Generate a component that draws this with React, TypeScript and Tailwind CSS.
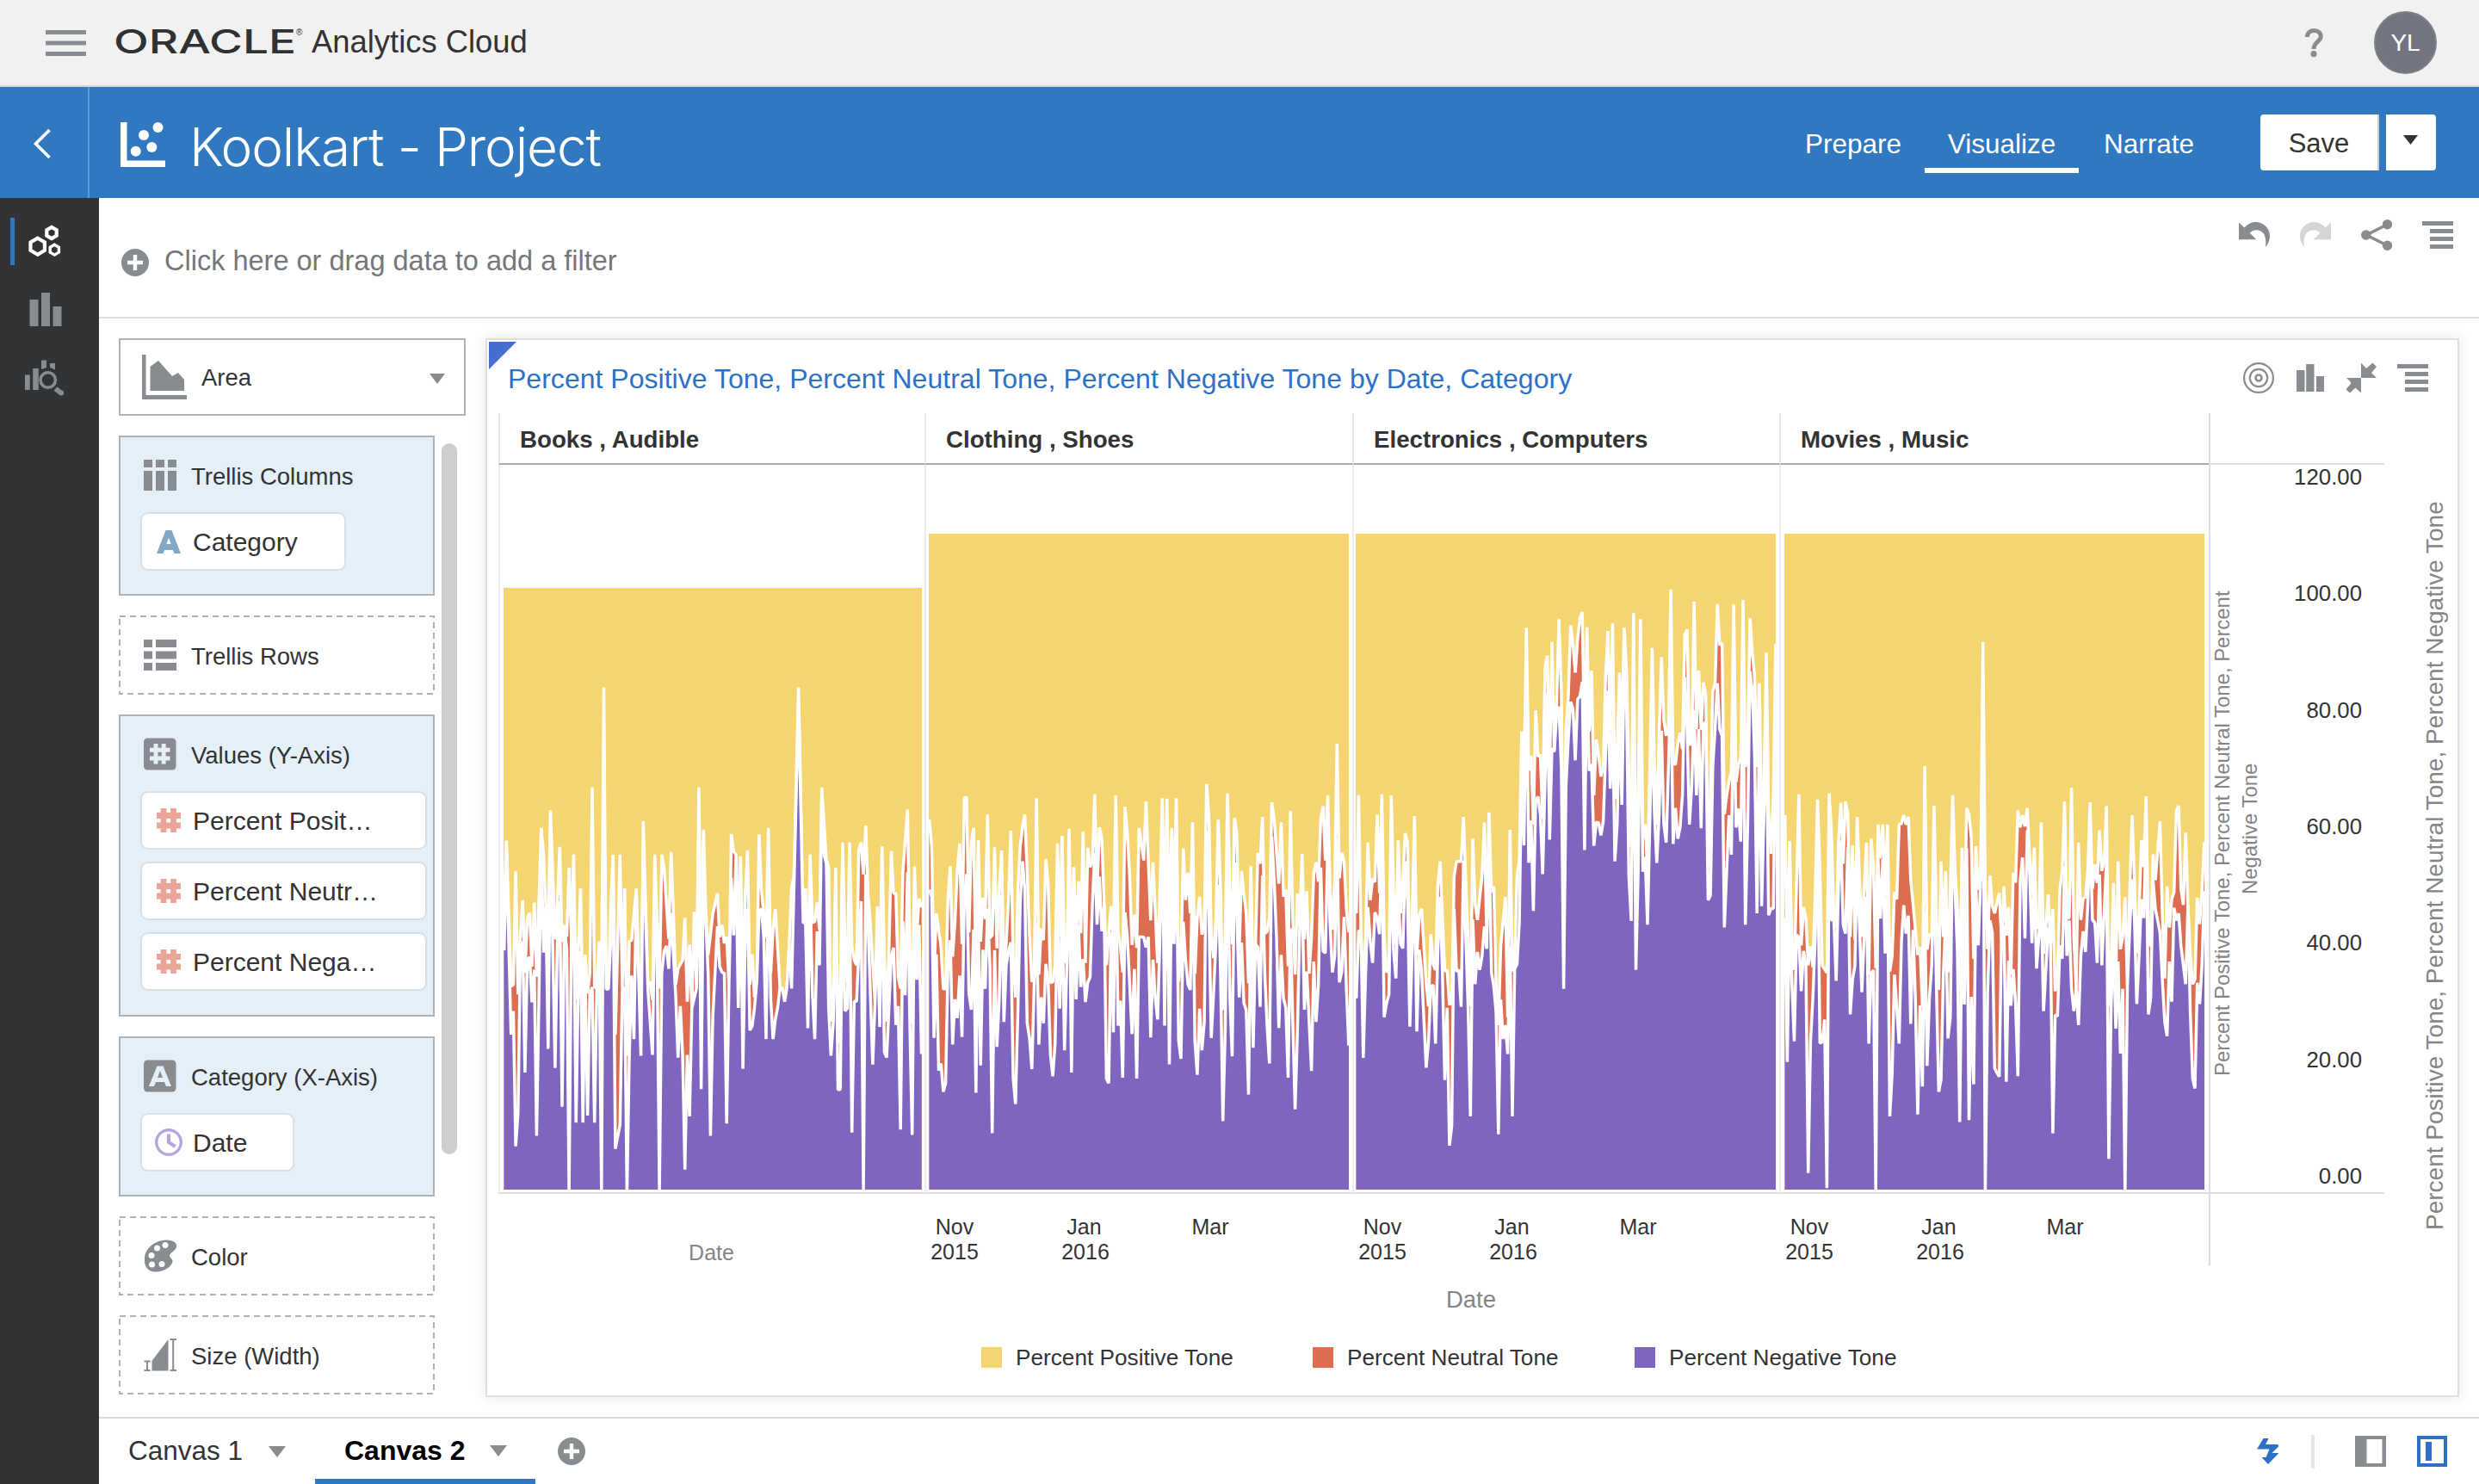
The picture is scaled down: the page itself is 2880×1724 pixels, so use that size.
import React from "react";

type Panel = {
  name: string;
  width: string;
  svgClass: string;
  svgWidth: number;
  dx: number;
  x0: number;
  step: number;
  oy: number;
  ky: number;
  top: number;
  neutral: string;
  negative: string;
};

const PLOT_HEIGHT = 842;

const panels: Panel[] = [
  {
    name: "Books , Audible",
    width: "w-[495px]",
    svgClass: "ml-[4px]",
    svgWidth: 486,
    dx: -15,
    x0: 47,
    step: 8.08,
    oy: 60,
    ky: 1.96,
    top: 143,
    neutral:
      "47,900 55,738 71,1070 82,1066 88,808 96,1088 104,960 112,874 120,1038 128,915 138,903 144,1025 152,879 162,1048 176,709 184,770 193,888 200,960 208,669 225,963 233,880 240,752 249,968 257,930 265,957 273,800 281,962 289,770 297,1100 305,985 313,847 321,1150 330,998 338,1086 346,1040 354,617 362,1072 370,1072 378,968 386,1076 394,389 402,1076 410,1070 419,880 427,770 436,1180 451,770 459,1074 467,847 476,1228 484,967 492,965 508,847 524,1200 532,694 548,1070 556,1060 564,1100 572,770 589,1075 597,770 605,800 621,962 629,764 637,900 645,1065 653,1030 669,1010 677,914 685,1105 693,975 701,1118 710,900 718,1074 726,617 734,1000 742,713 750,900 758,998 774,905 790,858 798,958 806,930 815,972 823,957 831,1066 839,723 847,762 858,770 863,950 871,774 880,1100 887,860 895,760 906,1066 912,997 920,1095 928,1060 936,724 944,850 960,960 968,709 976,1040 985,940 993,894 1009,1072 1017,1074 1025,1105 1033,1070 1042,974 1050,844 1058,820 1073,389 1090,920 1098,847 1106,1040 1114,770 1122,925 1130,922 1138,879 1146,940 1155,617 1170,780 1180,800 1187,1150 1195,1120 1203,800 1211,1200 1219,1080 1227,742 1235,960 1241,1062 1251,742 1259,980 1268,1010 1276,1022 1283,760 1291,742 1300,815 1307,704 1316,860 1325,930 1338,1105 1348,888 1356,1050 1364,751 1372,1000 1380,1150 1388,980 1396,762 1404,858 1413,858 1420,1050 1428,1075 1437,810 1453,667 1461,980 1467,1155 1477,797 1486,950 1494,870 1501,890",
    negative:
      "47,988 55,760 71,1180 79,1126 88,1434 96,1360 104,1000 112,968 120,1266 128,1010 136,1003 144,1106 152,1032 160,1410 168,1100 176,750 184,993 193,888 200,1212 208,720 225,1256 233,960 240,875 249,1344 257,935 265,985 273,1540 281,962 289,900 297,1380 305,1060 313,990 321,1380 330,1050 338,1364 346,1086 354,1072 362,1380 370,1074 378,1000 386,1540 394,600 402,1076 412,1076 427,850 436,1440 451,1385 459,1074 467,1074 476,1540 484,1228 492,1045 500,1190 508,860 524,1228 532,750 548,1076 564,1226 572,900 580,1000 589,1540 597,1040 605,990 613,978 621,1030 629,903 645,1090 653,1232 661,1115 669,1230 677,1487 685,1226 693,1366 701,1120 718,1074 726,700 734,1304 742,800 758,1040 766,1410 774,1140 790,933 798,1025 806,1038 815,1040 823,1382 831,1066 839,823 847,954 855,780 863,1119 871,850 880,1258 887,960 895,893 903,1170 914,1160 922,1120 930,1060 936,900 944,893 952,960 960,1190 968,800 976,1100 985,1190 993,1145 1001,1118 1009,1072 1017,1074 1025,1105 1033,1072 1042,974 1050,1075 1058,850 1073,420 1090,925 1098,925 1106,1165 1114,850 1122,1090 1130,1190 1138,945 1146,1022 1155,660 1163,770 1171,790 1179,1120 1187,1228 1195,1150 1203,850 1211,1305 1219,1305 1227,860 1235,1126 1244,1120 1251,858 1259,1403 1268,1104 1276,1104 1291,876 1300,1540 1307,815 1316,930 1332,1248 1340,1105 1348,950 1356,1162 1364,800 1372,1220 1380,1232 1396,1000 1404,982 1413,1158 1420,1115 1428,1396 1437,922 1445,1090 1453,810 1461,1155 1469,1408 1477,860 1486,1055 1494,930 1501,1224",
  },
  {
    name: "Clothing , Shoes",
    width: "w-[497px]",
    svgClass: "ml-[3px]",
    svgWidth: 488,
    dx: -9,
    x0: 29,
    step: 8.12,
    oy: 0,
    ky: 1.8233,
    top: 80,
    neutral:
      "30,752 38,810 46,1080 53,950 70,1020 80,1110 86,1110 94,920 102,850 111,1042 118,970 126,860 134,802 143,1015 151,706 160,704 169,990 176,800 184,769 191,1090 200,795 208,1010 216,917 224,962 232,741 241,1002 250,996 257,810 265,1024 273,900 281,817 291,1095 299,1010 306,920 313,775 322,1060 330,1128 338,900 346,810 354,765 362,741 370,860 378,1000 387,1095 395,1080 403,706 411,1080 419,982 427,1007 436,835 444,890 452,1097 460,1095 468,1060 476,802 484,1000 492,786 500,1050 508,1055 516,771 525,1085 533,852 541,1020 549,882 557,992 565,777 574,1055 582,811 590,852 598,840 606,698 615,900 622,768 632,790 648,1060 662,935 671,1018 680,700 688,990 696,1020 703,1075 711,724 720,780 728,870 736,1017 744,953 752,1023 761,769 776,838 785,713 800,965 809,842 823,1055 833,900 841,706 850,960 858,707 866,990 874,770 882,907 890,706 898,1095 906,1050 914,813 922,922 931,864 939,950 947,757 957,1078 963,960 971,915 979,995 988,970 996,676 1004,745 1012,1000 1020,1045 1028,960 1037,752 1045,900 1053,1155 1060,1000 1069,696 1077,900 1085,1016 1093,748 1102,780 1110,1028 1118,860 1126,910 1134,950 1142,1098 1150,850 1158,1100 1166,1016 1174,822 1184,845 1191,746 1199,993 1207,988 1215,960 1222,715 1231,750 1247,887 1256,757 1264,915 1272,900 1280,1062 1288,733 1296,960 1304,1080 1312,908 1320,976 1329,824 1337,1005 1345,903 1353,1078 1361,1000 1369,865 1377,842 1385,883 1393,750 1401,723 1409,838 1418,700 1426,900 1434,985 1442,880 1450,591 1459,876 1466,822 1475,840 1483,940 1490,990",
    negative:
      "30,900 38,915 46,1214 53,1037 62,1283 70,1268 78,1328 86,1310 94,1060 102,1007 111,1228 118,1132 126,1172 134,1082 143,1212 151,920 157,867 167,1120 176,1154 182,984 191,1330 200,960 208,1272 216,1027 224,1110 232,940 240,1060 248,1416 257,1028 265,1233 273,1130 281,912 289,1180 297,1060 305,1030 313,1012 322,1300 330,1354 338,1160 346,930 354,840 362,900 370,1182 378,1215 387,1280 395,1100 403,972 411,1228 419,1128 427,1183 436,1057 444,1095 452,1250 460,1295 468,1225 476,955 484,1152 492,930 500,1240 508,1060 516,830 525,1287 533,930 541,1132 549,975 557,1106 565,1047 574,1138 582,1097 590,1085 598,930 606,822 614,974 622,872 630,988 637,935 646,1300 655,1310 662,990 671,1202 680,830 688,1188 696,1135 703,1298 713,948 720,1000 728,1100 736,1206 744,1068 752,1300 761,1000 776,1000 785,1022 793,1000 800,1213 809,1048 817,1130 825,1175 833,1000 841,770 850,1188 858,770 866,1270 874,885 882,1015 890,800 898,1220 906,1258 914,968 922,1050 931,1100 939,1112 947,850 955,1220 963,1292 971,1152 980,1240 988,1180 998,776 1004,950 1012,1214 1020,1120 1028,1010 1037,890 1045,1080 1052,1390 1060,1200 1069,800 1077,1130 1085,1253 1095,842 1102,950 1110,1128 1118,1012 1126,1140 1134,1155 1142,1334 1150,950 1158,1235 1166,1015 1174,1022 1182,1148 1190,870 1199,1080 1207,1190 1215,1268 1223,787 1231,880 1239,1000 1247,1193 1256,1038 1264,1130 1272,1150 1280,1298 1288,982 1296,1180 1304,1365 1312,1200 1320,976 1329,914 1337,1154 1345,1073 1353,1180 1361,1284 1369,1052 1377,1180 1385,1100 1393,853 1401,1030 1412,1034 1418,806 1426,970 1434,1075 1442,1040 1450,792 1458,1096 1466,1075 1475,958 1483,1110 1490,1230",
  },
  {
    name: "Electronics , Computers",
    width: "w-[496px]",
    svgClass: "ml-[2px]",
    svgWidth: 488,
    dx: -15,
    x0: 47,
    step: 8.12,
    oy: 0,
    ky: 1.8233,
    top: 80,
    neutral:
      "47,950 55,700 63,985 71,1118 79,1000 88,800 96,922 104,877 112,884 120,741 128,907 136,698 144,1000 153,1075 161,1070 169,700 177,900 185,1016 193,795 205,950 213,880 218,780 226,800 234,1068 242,960 250,744 258,1038 266,955 274,940 290,1100 298,1147 307,994 315,1058 322,1070 331,890 339,840 347,960 355,1073 363,1070 371,1144 379,1136 388,872 396,840 412,840 421,746 429,880 445,1147 453,792 462,930 470,964 486,870 493,758 502,1000 510,736 519,905 527,893 535,1100 543,1187 551,1020 567,915 575,1170 583,773 591,1073 599,1060 607,870 616,840 624,565 632,660 640,345 648,647 656,616 664,762 672,520 680,618 688,614 697,750 705,430 713,404 721,655 729,375 737,604 745,510 753,327 762,480 770,920 778,560 786,490 794,340 802,380 811,440 819,370 826,325 835,312 843,600 851,344 859,565 867,436 876,700 884,582 892,615 900,660 908,640 916,450 924,352 932,562 940,336 949,708 957,600 965,440 973,576 981,345 989,433 997,650 1005,810 1013,314 1021,917 1029,700 1038,327 1046,790 1054,762 1062,860 1070,640 1078,388 1087,640 1095,762 1103,570 1111,407 1119,540 1127,574 1135,555 1143,264 1152,632 1160,635 1168,590 1176,568 1184,602 1192,360 1200,349 1208,593 1216,590 1224,290 1232,560 1240,436 1249,562 1258,461 1266,490 1274,852 1283,700 1289,480 1298,465 1305,295 1314,382 1324,378 1331,740 1339,700 1347,670 1355,650 1362,296 1371,672 1379,635 1387,620 1395,286 1403,640 1411,600 1420,325 1428,400 1436,450 1444,640 1452,463 1460,760 1468,680 1476,398 1484,740 1492,824 1500,700 1508,379",
    negative:
      "47,1130 55,986 63,990 71,1256 79,1080 88,937 96,1010 104,1055 112,948 120,960 128,994 136,800 144,1170 153,1140 161,1122 169,830 177,1030 185,1088 193,905 201,1015 209,1024 220,840 226,920 234,1190 242,1030 250,882 258,1200 266,1027 274,1070 290,1277 298,1220 307,1105 315,1102 323,1226 331,1030 338,915 347,1080 355,1303 363,1150 372,1442 380,1400 390,940 396,1073 404,1070 412,1148 421,838 429,1000 437,1150 445,1380 455,963 462,1100 470,1032 478,1070 486,1040 494,978 502,1025 510,800 519,1075 527,1105 535,1160 543,1418 551,1133 559,1216 567,1187 575,1248 583,1020 591,1380 599,1068 607,1058 616,970 624,640 632,806 640,430 648,843 656,753 665,945 673,710 680,703 688,740 697,867 709,483 721,794 729,600 737,608 745,530 753,512 762,640 770,1110 778,680 786,580 794,502 802,516 811,626 819,497 827,490 833,460 843,816 851,440 860,648 868,634 876,807 884,757 893,758 900,785 908,755 922,478 932,686 940,530 949,840 957,760 965,528 973,720 982,434 989,500 997,870 1005,966 1013,440 1022,1070 1030,860 1038,450 1046,862 1054,830 1062,974 1070,760 1078,542 1087,740 1095,843 1103,740 1112,563 1119,760 1127,800 1135,640 1143,458 1151,803 1160,727 1168,792 1176,768 1184,700 1192,450 1200,560 1208,762 1216,680 1224,520 1232,700 1240,560 1249,770 1257,545 1266,560 1274,922 1283,912 1291,640 1298,560 1306,463 1314,560 1322,575 1330,980 1338,860 1347,742 1355,826 1363,500 1371,768 1379,728 1387,798 1395,460 1403,974 1411,760 1422,437 1428,480 1436,620 1444,950 1452,560 1460,935 1468,740 1476,540 1484,954 1492,940 1500,940 1508,560",
  },
  {
    name: "Movies , Music",
    width: "w-[499px]",
    svgClass: "ml-[4px]",
    svgWidth: 488,
    dx: -13,
    x0: 41,
    step: 8.12,
    oy: 0,
    ky: 1.8233,
    top: 80,
    neutral:
      "41,742 49,1070 57,797 65,1020 74,1070 82,880 90,698 98,1018 106,937 114,960 122,1060 130,1020 138,1064 146,900 155,709 163,860 171,1060 187,1076 196,696 204,780 212,960 220,980 228,800 236,716 244,845 252,713 261,740 269,1000 277,806 285,1005 293,746 301,880 309,1000 317,900 325,800 334,1080 342,792 350,850 357,1066 365,762 374,834 382,762 390,912 398,762 406,1073 414,1040 423,905 431,920 440,762 448,760 456,742 464,762 472,746 480,880 488,930 496,985 504,1038 512,1022 520,1148 528,638 537,1027 545,994 553,1000 561,722 569,950 577,1112 585,840 593,1000 601,860 610,1075 618,900 626,700 634,860 642,940 650,1117 658,811 667,1000 675,727 683,740 691,790 699,1046 707,808 715,900 723,880 731,375 740,900 748,1026 756,870 763,935 771,950 779,927 788,907 796,1010 804,893 812,997 820,937 829,1080 838,864 846,885 854,732 862,768 870,742 878,766 885,727 893,830 902,912 910,811 918,980 926,980 934,757 943,1036 951,980 959,910 967,1015 975,941 983,1115 991,1080 1000,900 1008,860 1016,713 1024,960 1032,960 1040,684 1048,1000 1056,1110 1064,800 1073,964 1081,918 1089,916 1097,860 1105,715 1113,898 1121,847 1129,886 1137,774 1146,860 1154,840 1162,723 1171,1148 1178,1060 1186,886 1194,1100 1202,840 1211,1026 1219,1000 1227,916 1235,1105 1243,900 1251,742 1259,880 1268,1034 1276,950 1284,795 1291,852 1300,702 1308,1000 1316,1020 1325,825 1333,880 1348,755 1356,950 1365,1088 1373,893 1381,980 1389,920 1397,905 1405,733 1413,722 1421,900 1429,932 1438,779 1446,935 1454,1040 1462,1100 1470,1090 1478,917 1486,973 1494,900 1502,799",
    negative:
      "41,960 49,1265 57,940 65,1100 73,1221 83,996 90,1000 98,1115 106,1030 114,1060 122,1500 130,1220 138,1130 146,1000 155,780 163,1225 171,1222 179,1175 187,1532 196,780 203,964 212,965 220,1093 228,890 236,796 244,975 252,993 260,810 269,1164 277,1090 285,1062 293,833 301,980 309,1117 317,1000 325,915 334,1226 342,1078 350,1070 357,1542 365,835 373,961 382,835 390,1035 398,874 406,1380 414,1290 422,1080 431,1150 439,1226 447,1010 455,933 463,993 472,955 480,1184 488,985 496,1130 504,1376 512,1145 520,1317 528,945 537,1273 545,1130 553,1060 561,840 569,1100 577,1328 586,1303 593,1080 601,960 610,1215 618,1170 626,780 634,900 642,1030 650,1392 658,967 667,1143 675,812 683,1388 691,1127 699,1312 707,900 715,1018 723,880 731,560 739,1542 747,1120 756,965 765,990 771,1278 780,1288 790,1296 796,980 804,977 812,1307 820,1050 829,1146 838,1068 846,1140 854,1295 862,880 870,832 878,1003 886,774 894,860 902,1013 910,880 918,1067 926,1000 934,920 943,1157 951,1070 959,980 967,1015 975,1416 983,1165 991,1168 1000,1018 1008,1046 1016,850 1024,1040 1032,965 1040,1110 1048,1157 1057,1110 1064,1187 1073,1040 1081,988 1089,1032 1097,930 1105,780 1113,964 1121,970 1129,1055 1138,868 1146,1060 1162,840 1170,1470 1178,1148 1186,1000 1194,1194 1202,1052 1211,1247 1219,1110 1227,1542 1235,1105 1243,980 1252,878 1260,960 1268,1142 1276,1040 1284,920 1291,960 1300,780 1308,1164 1316,1130 1325,880 1333,940 1348,990 1356,1090 1365,1180 1373,1210 1381,1052 1389,1137 1397,938 1405,965 1413,950 1421,1020 1438,1100 1446,933 1454,1160 1462,1300 1470,1321 1478,1097 1486,1142 1494,1060 1502,903",
  },
];

/* Snap every sample to its day on the axis and convert it to plot pixels. */
function toPoints(p: Panel, series: string): string[] {
  return series.split(" ").map((pair) => {
    const [x, y] = pair.split(",").map(Number);
    const day = Math.round((x - p.x0) / p.step);
    const px = (p.x0 + day * p.step) / 3 + p.dx;
    const py = p.oy + y / p.ky;
    return px.toFixed(1) + "," + py.toFixed(1);
  });
}

function Plot({ p }: { p: Panel }) {
  const layer = (series: string, fill: string) => {
    const pts = toPoints(p, series);
    const line = pts.join(" ");
    const lastX = pts[pts.length - 1].split(",")[0];
    const firstX = pts[0].split(",")[0];
    return (
      <>
        <polygon points={`${firstX},${PLOT_HEIGHT} ${line} ${lastX},${PLOT_HEIGHT}`} fill={fill} />
        <polyline points={line} fill="none" stroke="#fff" strokeWidth="3.5" strokeLinejoin="bevel" />
      </>
    );
  };
  return (
    <svg className={"block " + p.svgClass} width={p.svgWidth} height={PLOT_HEIGHT}>
      <rect x="0" y={p.top} width={p.svgWidth} height={PLOT_HEIGHT - p.top} fill="#f4d56f" />
      {layer(p.neutral, "#dd6d50")}
      {layer(p.negative, "#7f64c0")}
    </svg>
  );
}

const G = "#888b8f";

const Triangle = ({ color = G, w = 20, h = 13 }: { color?: string; w?: number; h?: number }) => (
  <svg width={w} height={h} viewBox="0 0 20 13" preserveAspectRatio="none">
    <path d="M0 0H20L10 13Z" fill={color} />
  </svg>
);

const PlusCircle = () => (
  <svg width="32" height="32" viewBox="0 0 32 32">
    <circle cx="16" cy="16" r="16" fill={G} />
    <path d="M16 7V25M7 16H25" stroke="#fff" strokeWidth="4.4" />
  </svg>
);

const Help = () => (
  <svg width="22" height="34" viewBox="0 0 22 34">
    <path
      d="M2.500 10C2.500 5 6 2.500 10.500 2.500C15 2.500 18.200 5.200 18.200 9.500C18.200 15 10 16 10 24"
      fill="none"
      stroke={G}
      strokeWidth="5"
    />
    <circle cx="10" cy="29.700" r="3.600" fill={G} />
  </svg>
);

const MenuLines = () => (
  <svg width="36" height="36" viewBox="0 0 36 36" fill={G}>
    <path d="M0 2H36V7H0ZM9 11H36V16H9ZM9 20H36V25H9ZM9 29H36V34H9Z" />
  </svg>
);

const Undo = ({ flip = false }: { flip?: boolean }) => (
  <svg width="36" height="30" viewBox="0 0 36 30" className={flip ? "-scale-x-100" : ""}>
    <path
      d="M0 0.500V20.300H20.300L12.500 12.500C17 8 24 8 28 12.500C31.500 16.500 31.800 23 31 29C34 26 36 20.500 36 16C36 7 28.500 0 19.500 0C14.500 0 10 2.500 6.500 6.500Z"
      fill={flip ? "#d3d5d6" : G}
    />
  </svg>
);

const Share = () => (
  <svg width="36" height="36" viewBox="0 0 36 36" fill={G}>
    <path d="M30 6L6 18L30 30" fill="none" stroke={G} strokeWidth="3.4" />
    <circle cx="30.5" cy="5.7" r="5.7" />
    <circle cx="5.8" cy="18" r="5.8" />
    <circle cx="30.5" cy="30.3" r="5.7" />
  </svg>
);

const BarsIcon = () => (
  <svg width="32" height="32" viewBox="0 0 32 32" fill={G}>
    <path d="M0 7H9.5V32H0ZM11.2 0H20.5V32H11.2ZM23 14H32V32H23Z" />
  </svg>
);

const Target = () => (
  <svg width="36" height="36" viewBox="0 0 36 36" fill="none" stroke={G} strokeWidth="2.2">
    <circle cx="18" cy="18" r="16.900" />
    <circle cx="18" cy="18" r="10.200" />
    <circle cx="18" cy="18" r="3.500" strokeWidth="2.600" />
  </svg>
);

const Collapse = () => (
  <svg width="36" height="36" viewBox="0 0 36 36" fill={G}>
    <path d="M17 0.500V18H35L29 12.300L35 5L30.500 0.500L23 7Z" />
    <path d="M17 35.500V18H0L5 22.800V25L0 30.500V32L4 35.500L10.500 29.500Z" />
  </svg>
);

const ChipHash = () => (
  <svg width="28" height="28" viewBox="0 0 28 28">
    <path d="M8 0V28M19.500 0V28M0 8.500H28M0 20H28" stroke="#e9a698" strokeWidth="6.800" fill="none" />
  </svg>
);

const ChipA = () => (
  <svg width="28" height="27" viewBox="0 0 28 27">
    <path fillRule="evenodd" d="M10.500 0H17.500L28 27H20.500L18.800 23H9.200L7.500 27H0ZM14 9L11.300 16H16.700Z" fill="#82a8c8" />
  </svg>
);

const ChipClock = () => (
  <svg width="32" height="32" viewBox="0 0 32 32" fill="none" stroke="#b5a6db">
    <circle cx="16" cy="16" r="14.300" strokeWidth="3.400" />
    <path d="M16 6.500V16L23.500 21" strokeWidth="4.200" />
  </svg>
);

const TrellisCols = () => (
  <svg width="38" height="38" viewBox="0 0 38 38" fill={G}>
    <path d="M0 1H10V10H0ZM14 1H24V10H14ZM28 1H38V10H28ZM0 14H10V37H0ZM14 14H24V37H14ZM28 14H38V37H28Z" />
  </svg>
);

const TrellisRows = () => (
  <svg width="38" height="38" viewBox="0 0 38 38" fill={G}>
    <path d="M0 1H10V10H0ZM14 1H38V10H14ZM0 14.500H10V23.500H0ZM14 14.500H38V23.500H14ZM0 28H10V37H0ZM14 28H38V37H14Z" />
  </svg>
);

const BoxHash = () => (
  <svg width="38" height="38" viewBox="0 0 38 38">
    <rect y="0.500" width="37.500" height="37" rx="4.500" fill={G} />
    <path d="M14 7V30.500M23.200 7V30.500M7 14.200H30.500M7 24H30.500" stroke="#e5eff8" strokeWidth="4.900" />
  </svg>
);

const BoxA = () => (
  <svg width="38" height="38" viewBox="0 0 38 38">
    <rect y="0.500" width="37.500" height="37" rx="4.500" fill={G} />
    <path fillRule="evenodd" d="M15.500 7.500H22.500L32 31H26L24 26H14L12 31H6ZM19 13L16 21H22Z" fill="#e5eff8" />
  </svg>
);

const Palette = () => (
  <svg width="40" height="38" viewBox="0 0 40 38">
    <path
      d="M14 37.500C4 37.500 0 30 1 21C2 10 13 1 26 0.500C34 0.200 39 4 38 8.500C37 13 31 15 30 18.500C30 21.500 33.500 22 33.500 25C33.500 30 25 37.500 14 37.500Z"
      fill={G}
    />
    <g fill="#fff">
      <circle cx="25" cy="6.500" r="3.500" />
      <circle cx="15.500" cy="10" r="3.500" />
      <circle cx="9" cy="18.500" r="3.500" />
      <circle cx="9.500" cy="29" r="3.500" />
      <circle cx="21" cy="28.500" r="3.500" />
    </g>
  </svg>
);

const SizeIcon = () => (
  <svg width="38" height="38" viewBox="0 0 38 38">
    <path d="M9.500 37.500V26L28.500 1V37.500Z" fill={G} />
    <path d="M30.500 1H38M30.500 37H38M34.200 1V37M0.500 26.500H7.500M0.500 37H7.500M4 26.500V37" stroke={G} strokeWidth="2" />
  </svg>
);

const hex = (cx: number, cy: number, r: number) =>
  [0, 1, 2, 3, 4, 5]
    .map((k) => {
      const a = (Math.PI / 3) * k + Math.PI / 2;
      return (cx + r * Math.cos(a)).toFixed(1) + "," + (cy + r * Math.sin(a)).toFixed(1);
    })
    .join(" ");

function Chip({ icon, label, width }: { icon: React.ReactNode; label: string; width: string }) {
  return (
    <div className={"flex h-[68px] items-center rounded-[9px] border-2 border-[#d8e0e6] bg-white text-[30px] " + width}>
      <span className="flex w-[59px] shrink-0 items-center justify-center pl-[3px]">{icon}</span>
      <span className="pt-[1px] whitespace-nowrap">{label}</span>
    </div>
  );
}

function DropZone({
  icon,
  label,
  height,
  children,
}: {
  icon: React.ReactNode;
  label: string;
  height: string;
  children: React.ReactNode;
}) {
  return (
    <div className={"w-[367px] shrink-0 border-2 border-[#afb2b4] bg-[#e5eff8] " + height}>
      <div className="flex h-[88px] items-center pl-[27px] text-[27.5px]">
        <span className="w-[55px]">{icon}</span>
        <span className="pt-[3px]">{label}</span>
      </div>
      <div className="-mt-px flex flex-col gap-[14px] pl-[23px]">{children}</div>
    </div>
  );
}

function DashedZone({ icon, label }: { icon: React.ReactNode; label: string }) {
  return (
    <div className="relative h-[92px] w-[367px] shrink-0">
      <svg className="absolute inset-0" width="367" height="92">
        <rect x="1" y="1" width="365" height="90" fill="none" stroke="#afb2b4" strokeWidth="2" strokeDasharray="7 5" />
      </svg>
      <div className="flex h-full items-center pl-[29px] text-[27.5px]">
        <span className="w-[55px]">{icon}</span>
        <span className="pt-[3px]">{label}</span>
      </div>
    </div>
  );
}

const Legend = ({ color, label, gap }: { color: string; label: string; gap: string }) => (
  <div className={"flex items-center " + gap}>
    <span className={"mr-[16px] h-[24px] w-[24px] " + color} />
    <span className="text-[26.2px] whitespace-nowrap">{label}</span>
  </div>
);

export default function App() {
  return (
    <div className="flex h-[1724px] w-[2880px] flex-col overflow-hidden bg-white font-['Liberation_Sans',Arial,sans-serif] text-[#333]">
      {/* Brand bar */}
      <header className="flex h-[101px] shrink-0 items-center border-b-2 border-[#d9d9d9] bg-[#f1f1f1]">
        <svg className="ml-[53px]" width="47" height="30" viewBox="0 0 47 30" fill={G}>
          <path d="M0 0H47V5H0ZM0 12.500H47V17.500H0ZM0 25H47V30H0Z" />
        </svg>
        <svg className="ml-[31px]" width="228" height="60" viewBox="0 0 228 60">
          <text
            x="1"
            y="41.5"
            textLength="212"
            lengthAdjust="spacingAndGlyphs"
            fontFamily="Inter"
            fontWeight="500"
            fontSize="38.5"
            fill="#2f3133"
          >
            ORACLE
          </text>
          <text x="213" y="21" fontSize="10" fill="#2f3133">
            ®
          </text>
        </svg>
        <span className="ml-[3px] text-[36.4px]">Analytics Cloud</span>
        <span className="mr-[58px] ml-auto">
          <Help />
        </span>
        <span className="mr-[49px] flex h-[73px] w-[73px] items-center justify-center rounded-full border-2 border-[#7d8085] bg-[#72757f] text-[28px] text-white">
          YL
        </span>
      </header>

      {/* Project bar */}
      <div className="flex h-[129px] shrink-0 items-center bg-[#3079c1] text-white">
        <div className="flex h-full w-[104px] items-center border-r-2 border-[#5b97d2] pt-[3px] pl-[38px]">
          <svg width="22" height="36" viewBox="0 0 22 36" fill="none" stroke="#fff" strokeWidth="3.600">
            <path d="M19.500 2L3.500 18L19.500 34" />
          </svg>
        </div>
        <svg className="mt-[5px] ml-[36px]" width="52" height="52" viewBox="0 0 52 52" fill="#fff">
          <path d="M0 0H7.500V44.500H52V52H0Z" />
          <circle cx="43.500" cy="6" r="6" />
          <circle cx="27" cy="15" r="6" />
          <circle cx="36.300" cy="29" r="6" />
          <circle cx="17.700" cy="33.700" r="6" />
        </svg>
        <h1 className="mt-[10px] ml-[28px] font-['Inter'] text-[62px] leading-none font-light tracking-[-1.100px] whitespace-nowrap">
          Koolkart - Project
        </h1>
        <nav className="ml-auto flex h-[70px] text-[31.5px] leading-[73px]">
          <span className="w-[166px] text-center">Prepare</span>
          <span className="h-[70px] w-[179px] border-b-[6px] border-white text-center">Visualize</span>
          <span className="w-[163px] text-center">Narrate</span>
        </nav>
        <button className="ml-[48px] h-[65px] w-[138px] rounded-l-[4px] border-r-2 border-[#cfcfcf] bg-white pt-[4px] text-[31px] text-[#333]">
          Save
        </button>
        <button className="mr-[50px] ml-[8px] flex h-[65px] w-[58px] justify-center rounded-r-[4px] bg-white pt-[24px] pr-[2px]">
          <Triangle color="#333" w={17} h={11} />
        </button>
      </div>

      <div className="flex min-h-0 flex-1">
        {/* Side rail */}
        <aside className="flex w-[115px] shrink-0 flex-col bg-[#323335]">
          <div className="mt-[23px] ml-[12px] flex h-[55px] items-center border-l-[5px] border-[#3079c1] pl-[15px]">
            <svg width="42" height="42" viewBox="32 259.500 42 42" fill="none" stroke="#fff" strokeWidth="4.200">
              <polygon points={hex(43.7, 285.7, 9.5)} />
              <polygon points={hex(60, 270, 6.6)} />
              <polygon points={hex(63.3, 289.7, 5.9)} strokeWidth="3.400" />
            </svg>
          </div>
          <svg className="mt-[32px] ml-[34px]" width="38" height="39" viewBox="0 0 38 39" fill={G}>
            <path d="M0.500 8H10.500V39H0.500ZM14 0H24V39H14ZM27.500 16H37.500V39H27.500Z" />
          </svg>
          <svg className="mt-[37px] ml-[27px]" width="50" height="48" viewBox="27 416 50 48" fill={G}>
            <path d="M29 435.500H34.800V453H29ZM38.200 428H44.800V453H38.200ZM48 418.500H54V427L48 429ZM58 422H64V429.500L58 427Z" />
            <circle cx="55.700" cy="441.500" r="8.700" fill="none" stroke={G} strokeWidth="3.600" />
            <path d="M64.500 451.500L71.500 457" stroke={G} strokeWidth="6" strokeLinecap="butt" />
            <circle cx="71.200" cy="456.500" r="2.900" />
          </svg>
        </aside>

        <main className="flex min-w-0 flex-1 flex-col">
          {/* Filter bar */}
          <section className="flex h-[140px] shrink-0 border-b-2 border-[#d8e0e6]">
            <div className="mt-[55px] ml-[26px] flex h-[40px] items-center">
              <PlusCircle />
              <span className="ml-[18px] pb-[3px] text-[32.5px] text-[#757779]">Click here or drag data to add a filter</span>
            </div>
            <div className="mt-[25px] mr-[30px] ml-auto flex h-[36px] items-center gap-[35px]">
              <Undo />
              <Undo flip />
              <Share />
              <MenuLines />
            </div>
          </section>

          <section className="flex h-[1276px] shrink-0">
            {/* Grammar panel */}
            <div className="mt-[23px] ml-[23px] w-[403px] shrink-0">
              <div className="flex h-[90px] items-center border-2 border-[#afb2b4] pr-[22px] pl-[25px] text-[27.5px]">
                <svg width="52" height="52" viewBox="0 0 52 52" fill={G}>
                  <path d="M0 0H4.500V47H52V52H0Z" />
                  <path d="M9.500 42V14L19 7L35 25L42 21L49 29V42Z" />
                </svg>
                <span className="ml-[17px] pt-[2px]">Area</span>
                <span className="mt-[4px] ml-auto">
                  <Triangle w={18} h={12} />
                </span>
              </div>
              <div className="mt-[23px] flex">
                <div className="flex flex-col gap-[23px]">
                  <DropZone icon={<TrellisCols />} label="Trellis Columns" height="h-[186px]">
                    <Chip icon={<ChipA />} label="Category" width="w-[239px]" />
                  </DropZone>
                  <DashedZone icon={<TrellisRows />} label="Trellis Rows" />
                  <DropZone icon={<BoxHash />} label="Values (Y-Axis)" height="h-[351px]">
                    <Chip icon={<ChipHash />} label="Percent Posit…" width="w-[333px]" />
                    <Chip icon={<ChipHash />} label="Percent Neutr…" width="w-[333px]" />
                    <Chip icon={<ChipHash />} label="Percent Nega…" width="w-[333px]" />
                  </DropZone>
                  <DropZone icon={<BoxA />} label="Category (X-Axis)" height="h-[186px]">
                    <Chip icon={<ChipClock />} label="Date" width="w-[179px]" />
                  </DropZone>
                  <DashedZone icon={<Palette />} label="Color" />
                  <DashedZone icon={<SizeIcon />} label="Size (Width)" />
                </div>
                <div className="mt-[9px] ml-[8px] h-[826px] w-[18px] rounded-full bg-[#cdcdcd]" />
              </div>
            </div>

            {/* Visualization card */}
            <div className="relative mt-[23px] ml-[23px] flex h-[1230px] w-[2293px] shrink-0 flex-col border-2 border-[#d8e0e6] bg-white shadow-[0_0_14px_rgba(0,0,0,0.1)]">
              <svg className="absolute top-[2px] left-[2px]" width="32" height="32">
                <path d="M0 0H32L0 32Z" fill="#466ed0" />
              </svg>
              <div className="flex h-[85px] shrink-0 items-center pt-[5px] pr-[34px] pl-[24px]">
                <span className="text-[32px] tracking-[0.020px] whitespace-nowrap text-[#2d71c7]">
                  Percent Positive Tone, Percent Neutral Tone, Percent Negative Tone by Date, Category
                </span>
                <div className="mt-[-2px] ml-auto flex items-center">
                  <Target />
                  <span className="ml-[26px]">
                    <BarsIcon />
                  </span>
                  <span className="ml-[26px]">
                    <Collapse />
                  </span>
                  <span className="ml-[23px]">
                    <MenuLines />
                  </span>
                </div>
              </div>

              <div className="flex h-[990px] shrink-0 pl-[13px]">
                <div className="flex">
                  {panels.map((p, i) => (
                    <div key={p.name} className={"shrink-0 " + p.width}>
                      <div className="h-[60px] border-b-2 border-l-2 border-[#a9a9a9] border-l-[#e6e8ea] pl-[23px] text-[27.700px] leading-[62px] font-bold whitespace-nowrap">
                        {p.name}
                      </div>
                      <div className="h-[847px] border-b-2 border-l-2 border-[#d8e0e6] border-l-[#ececec]">
                        <Plot p={p} />
                      </div>
                      {i === 0 ? (
                        <div className="pt-[52px] text-center text-[25px] leading-[32px] text-[#858585]">Date</div>
                      ) : (
                        <div className="flex pt-[24px] text-center text-[25px] leading-[29px]">
                          <div className="w-[70px]">
                            Nov
                            <br />
                            2015
                          </div>
                          <div className="w-[231px]">
                            Jan
                            <br />
                            <span className="pl-[3px]">2016</span>
                          </div>
                          <div className="w-[62px]">Mar</div>
                        </div>
                      )}
                    </div>
                  ))}
                </div>
                <div className="flex w-[204px] shrink-0 flex-col border-l-2 border-[#d8e0e6]">
                  <div className="h-[60px] border-b-2 border-[#d8e0e6]" />
                  <div className="flex h-[847px] border-b-2 border-[#d8e0e6]">
                    <div className="-ml-[2px] flex rotate-180 items-center justify-center text-center text-[23.900px] leading-[32px] whitespace-nowrap text-[#858585] [writing-mode:vertical-rl]">
                      <span>
                        <span className="inline-block -translate-y-[6px]">
                          Percent Positive Tone, Percent Neutral Tone, Percent
                        </span>
                        <br />
                        Negative Tone
                      </span>
                    </div>
                    <div className="mr-[26px] ml-auto flex h-[840px] flex-col justify-between text-right text-[25.800px] leading-[28px]">
                      {["120.00", "100.00", "80.00", "60.00", "40.00", "20.00", "0.00"].map((t) => (
                        <span key={t}>{t}</span>
                      ))}
                    </div>
                  </div>
                </div>
                <div className="ml-[42px] flex h-[1051px] rotate-180 items-center justify-center text-[28px] leading-[34px] whitespace-nowrap text-[#858585] [writing-mode:vertical-rl]">
                  Percent Positive Tone, Percent Neutral Tone, Percent Negative Tone
                </div>
              </div>

              <div className="h-[50px] w-[2286px] shrink-0 pt-[22px] text-center text-[27.5px] leading-[36px] text-[#858585]">
                Date
              </div>
              <div className="mt-[39px] flex items-center pl-[574px] leading-[36px]">
                <Legend color="bg-[#f4d56f]" label="Percent Positive Tone" gap="w-[385px]" />
                <Legend color="bg-[#dd6d50]" label="Percent Neutral Tone" gap="w-[374px]" />
                <Legend color="bg-[#7f64c0]" label="Percent Negative Tone" gap="" />
              </div>
            </div>
          </section>

          {/* Canvas tabs */}
          <footer className="flex h-[78px] shrink-0 items-center border-t-2 border-[#d9dbdc]">
            <div className="flex h-full w-[251px] items-center pl-[34px]">
              <span className="w-[163px] text-[31.5px]">Canvas 1</span>
              <Triangle />
            </div>
            <div className="flex h-[70px] w-[256px] items-center self-end border-b-[6px] border-[#3079c1] pb-[2px] pl-[34px] text-black">
              <span className="w-[169px] text-[32px] font-bold">Canvas 2</span>
              <Triangle />
            </div>
            <span className="ml-[26px]">
              <PlusCircle />
            </span>
            <div className="mr-[37px] ml-auto flex items-center">
              <svg width="26" height="30" viewBox="0 0 26 30" fill="#2d71c7">
                <path d="M7.500 0H13.500L10 7H24L25.500 9L17.500 17H25.500L13 30L5.500 22H10.500L14.500 12.500H0Z" />
              </svg>
              <span className="ml-[37px] h-[39px] w-[4px] bg-[#e6e6e6]" />
              <svg className="ml-[47px]" width="36" height="36" viewBox="0 0 36 36">
                <rect width="36" height="36" fill={G} />
                <rect x="13.500" y="4" width="18" height="28" fill="#fff" />
              </svg>
              <svg className="ml-[36px]" width="35" height="36" viewBox="0 0 35 36">
                <rect width="35" height="36" fill="#2d71c7" />
                <rect x="4" y="4" width="27" height="28" fill="#fff" />
                <rect x="10" y="7" width="7" height="22" fill="#2d71c7" />
              </svg>
            </div>
          </footer>
        </main>
      </div>
    </div>
  );
}
